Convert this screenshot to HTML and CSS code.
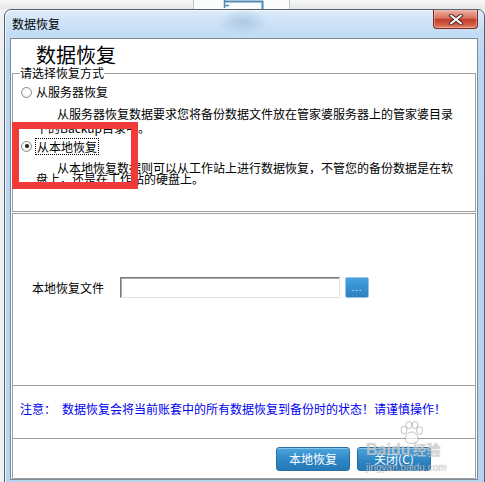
FILE: index.html
```html
<!doctype html>
<html lang="zh-CN">
    <head>
        <meta charset="utf-8">
        <title>数据恢复</title>
        <link rel="stylesheet" href="styles.css">
    </head>
    <body>
        <div class="behind">
            <svg width="485" height="9" viewBox="0 0 485 9">
                <rect x="193" y="0" width="96" height="9" fill="#fafbfb" />
                <line x1="193.5" y1="0" x2="193.5" y2="9" stroke="#b9c9cf" />
                <line x1="289.5" y1="0" x2="289.5" y2="9" stroke="#b9c9cf" />
                <path d="M224 1.5 H262.5 V9" fill="none" stroke="#4f8cb6" stroke-width="2" />
                <path d="M224.5 0 V8 M224 5.5 H229" fill="none" stroke="#4f8cb6" stroke-width="1.5" />
            </svg>
        </div>

        <div class="window">
            <div class="titlebar">
                <span class="title">数据恢复</span>
                <span class="close">
                    <svg width="14" height="11" viewBox="0 0 14 11">
                        <path d="M2 1.5 L12 9.5 M12 1.5 L2 9.5" stroke="#4a2b26" stroke-width="4" stroke-linecap="round" />
                        <path d="M2 1.5 L12 9.5 M12 1.5 L2 9.5" stroke="#fff" stroke-width="2" stroke-linecap="round" />
                    </svg>
                </span>
            </div>

            <div class="client">
                <h1 class="heading">数据恢复</h1>

                <fieldset class="mode">
                    <legend>请选择恢复方式</legend>
                    <div class="option">
                        <span class="radio"></span>
                        <span>从服务器恢复</span>
                    </div>
                    <p class="desc">从服务器恢复数据要求您将备份数据文件放在管家婆服务器上的管家婆目录下的Backup目录中。</p>
                    <div class="option">
                        <span class="radio checked"></span>
                        <span class="focused">从本地恢复</span>
                    </div>
                    <p class="desc tight">从本地恢复数据则可以从工作站上进行数据恢复，不管您的备份数据是在软盘上，还是在工作站的硬盘上。</p>
                </fieldset>

                <div class="file-panel">
                    <div class="file-row">
                        <span class="file-label">本地恢复文件</span>
                        <span class="file-input"></span>
                        <span class="browse">...</span>
                    </div>
                </div>

                <div class="notice">
                    <span class="notice-head">注意：</span>数据恢复会将当前账套中的所有数据恢复到备份时的状态！请谨慎操作！
                </div>

                <div class="actions">
                    <button class="btn">本地恢复</button>
                    <button class="btn">关闭(C)</button>
                </div>
            </div>
        </div>

        <div class="highlight"></div>

        <div class="watermark">
            <svg class="paw" width="26" height="24" viewBox="0 0 26 24">
                <g fill="rgba(255,255,255,0.6)" stroke="rgba(120,120,120,0.45)" stroke-width="1">
                    <ellipse cx="6" cy="9" rx="3" ry="4" />
                    <ellipse cx="11" cy="4" rx="3" ry="3.5" />
                    <ellipse cx="17" cy="4" rx="3" ry="3.5" />
                    <ellipse cx="21.5" cy="9.5" rx="3" ry="4" />
                    <path d="M13.5 11 C8 11 6 18 8 20.5 C10 23 17 23 19.5 20.5 C21.5 18 19 11 13.5 11 Z" />
                </g>
            </svg>
            <div class="wm-brand">Baidu<span class="wm-cn">经验</span></div>
            <div class="wm-url">jingyan.baidu.com</div>
        </div>
    </body>
</html>
```

FILE: styles.css
```css
* {
    margin: 0;
    padding: 0;
    box-sizing: border-box;
}

html,
body {
    width: 485px;
    height: 482px;
    overflow: hidden;
}

body {
    position: relative;
    background: #eef0f1;
    color: #000;
    font-family: "Noto Sans CJK SC", "Noto Sans", sans-serif;
    font-size: 12px;
}

.behind {
    height: 9px;
    background: linear-gradient(#f7f7f7, #e6e8e9);
}

.behind svg {
    display: block;
}

.window {
    margin-left: 4px;
    width: 481px;
    height: 476px;
    border: 1px solid #55606c;
    border-radius: 7px 7px 0 0;
    padding: 0 6px 0 5px;
    background: linear-gradient(#dcebfa, #c2dcf5 24px, #b9d5f1 60px, #b7d3ef);
    box-shadow: inset 1px 1px 0 rgba(255, 255, 255, 0.7);
}

.titlebar {
    display: flex;
    justify-content: space-between;
    align-items: flex-start;
    height: 28px;
    padding-left: 2px;
    background: radial-gradient(ellipse 26px 13px at 233px 12px, rgba(110, 150, 190, 0.35), transparent);
}

.title {
    margin-top: 7px;
    line-height: 14px;
}

.close {
    display: flex;
    align-items: center;
    justify-content: center;
    width: 45px;
    height: 19px;
    border: 1px solid #7a2a20;
    border-top: 0;
    border-radius: 0 0 4px 4px;
    background: linear-gradient(#eab1a5, #d8735f 45%, #c23f2b 52%, #cf5a43 80%, #e08a6f);
    box-shadow: inset 0 0 0 1px rgba(255, 210, 200, 0.45);
}

.close svg {
    display: block;
}

.client {
    height: 442px;
    border: 1px solid #7d8895;
    background: #fff;
}

.heading {
    height: 27px;
    padding: 6px 0 0 25px;
    font-size: 20px;
    font-weight: normal;
    line-height: 20px;
}

.mode {
    margin: 0 1px;
    padding: 0 0 27px;
    border: 1px solid #a0a0a0;
}

.mode legend {
    margin-left: 7px;
    padding: 0;
    line-height: 14px;
}

.option {
    display: flex;
    align-items: center;
    gap: 4px;
    height: 16px;
    padding-left: 8px;
    line-height: 16px;
}

.mode legend + .option {
    margin-top: 4px;
}

.radio {
    width: 11px;
    height: 11px;
    border: 1px solid #8a8c8e;
    border-radius: 50%;
    background: radial-gradient(circle at 50% 40%, #fff 30%, #e2e3e4);
    display: flex;
    align-items: center;
    justify-content: center;
}

.radio.checked::after {
    content: "";
    width: 4px;
    height: 4px;
    border-radius: 50%;
    background: #1c1c1c;
}

.focused {
    outline: 1px dotted #000;
    outline-offset: 0;
    padding: 0 1px;
    line-height: 15px;
}

.desc {
    width: 420px;
    margin: 7px 0 3px 23px;
    text-indent: 21px;
    line-height: 14px;
}

.desc.tight {
    margin: 8px 0 0 23px;
    line-height: 11px;
}

.file-panel {
    height: 173px;
    margin: 1px 1px 0;
    padding: 63px 0 0 19px;
    border: 1px solid #a0a0a0;
}

.file-row {
    display: flex;
    align-items: center;
}

.file-label {
    width: 88px;
    line-height: 21px;
}

.file-input {
    width: 220px;
    height: 21px;
    border: 1px solid;
    border-color: #7b7b7b #e3e3e3 #e3e3e3 #7b7b7b;
    box-shadow: inset 1px 1px 0 #a9a9a9;
}

.browse {
    width: 24px;
    height: 21px;
    margin-left: 5px;
    border: 1px solid #9cc3e0;
    border-radius: 2px;
    background: linear-gradient(#45a2de, #2b80c0);
    color: #fff;
    font-family: "DejaVu Sans", sans-serif;
    font-size: 8px;
    line-height: 22px;
    letter-spacing: 1px;
    text-align: center;
}

.notice {
    height: 52px;
    margin: 0 1px;
    padding: 16px 0 0 7px;
    border-left: 1px solid #a0a0a0;
    border-right: 1px solid #a0a0a0;
    color: #0000f0;
    line-height: 14px;
}

.notice-head {
    margin-right: 6px;
}

.actions {
    display: flex;
    justify-content: flex-end;
    gap: 7px;
    height: 41px;
    margin: 0 1px;
    padding: 8px 44px 0 0;
    border: 1px solid #a0a0a0;
}

.btn {
    width: 74px;
    height: 24px;
    border: 1px solid #2a6fa4;
    border-radius: 3px;
    background: linear-gradient(#4aa6df, #2f86c5 55%, #2778b6);
    box-shadow: inset 0 1px 0 rgba(255, 255, 255, 0.35);
    color: #fff;
    font-family: "Noto Sans CJK SC", "Noto Sans", sans-serif;
    font-size: 12px;
    line-height: 22px;
}

.highlight {
    position: absolute;
    left: 12px;
    top: 122px;
    width: 126px;
    height: 67px;
    border: 7px solid #f13b3b;
}

.watermark {
    position: absolute;
    left: 366px;
    top: 421px;
    width: 92px;
    color: rgba(255, 255, 255, 0.55);
    text-shadow: 0 0 1px rgba(90, 90, 90, 0.6);
    font-family: "Liberation Sans", sans-serif;
}

.paw {
    display: block;
    margin-left: 32px;
}

.wm-brand {
    margin-top: -4px;
    font-size: 16px;
    font-weight: bold;
    line-height: 16px;
}

.wm-cn {
    margin-left: 2px;
    font-family: "Noto Sans CJK SC", sans-serif;
    font-size: 14px;
}

.wm-url {
    font-size: 10px;
    line-height: 12px;
    margin-top: 4px;
}
```
